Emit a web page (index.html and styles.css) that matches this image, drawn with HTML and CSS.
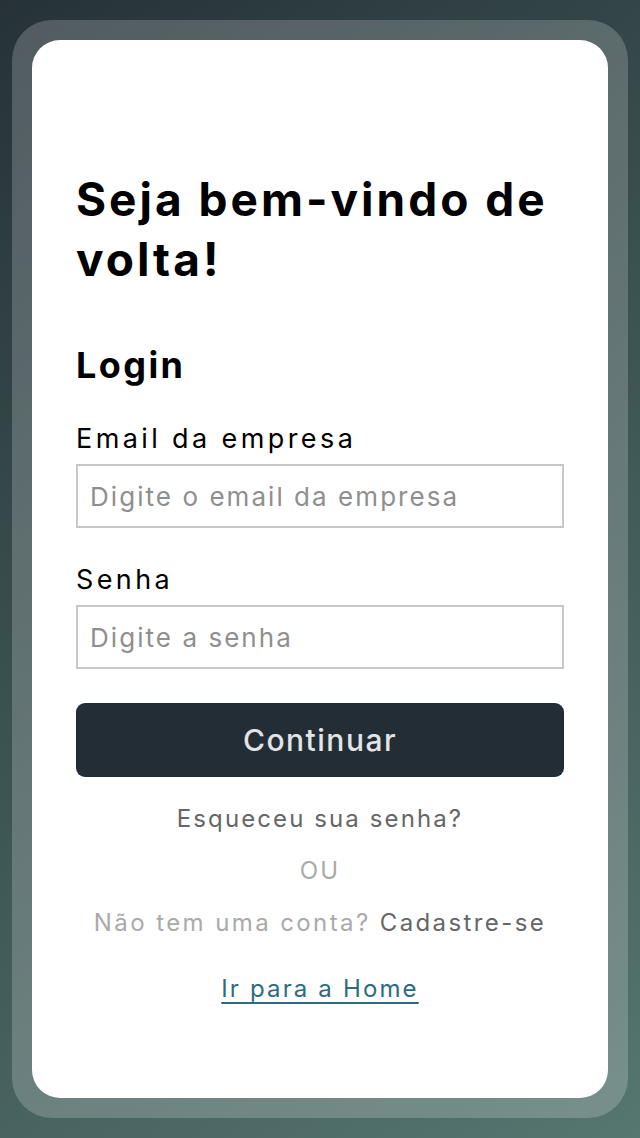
FILE: index.html
```html
<!DOCTYPE html>
<html lang="pt-BR">
<head>
<meta charset="utf-8">
<title>Login</title>
<link rel="stylesheet" href="styles.css">
</head>
<body>
<main class="frame">
  <section class="card">
    <h1 class="title">Seja bem-vindo de volta!</h1>
    <h2 class="subtitle">Login</h2>
    <form class="form">
      <label class="field">
        <span class="label">Email da empresa</span>
        <input class="input" type="email" placeholder="Digite o email da empresa">
      </label>
      <label class="field">
        <span class="label">Senha</span>
        <input class="input" type="password" placeholder="Digite a senha">
      </label>
      <button class="btn" type="button">Continuar</button>
    </form>
    <p class="forgot">Esqueceu sua senha?</p>
    <p class="or">OU</p>
    <p class="signup">Não tem uma conta? <span class="signup-link">Cadastre-se</span></p>
    <a class="home" href="#">Ir para a Home</a>
  </section>
</main>
</body>
</html>
```

FILE: styles.css
```css
* { box-sizing: border-box; }
html, body { margin: 0; padding: 0; }
body {
  width: 640px;
  height: 1138px;
  padding: 20px 12px;
  background: linear-gradient(145deg, #263238 0%, #567670 100%);
  font-family: Inter, "Noto Sans", sans-serif;
}
.frame {
  height: 100%;
  padding: 20px;
  border-radius: 40px;
  background: rgba(255, 255, 255, 0.2);
}
.card {
  height: 100%;
  background: #fff;
  border-radius: 28px;
  padding: 129px 44px 0;
  display: flex;
  flex-direction: column;
  align-items: stretch;
}
.title {
  margin: 0;
  font-size: 46px;
  line-height: 60px;
  font-weight: 700;
  letter-spacing: 3px;
  color: #000;
}
.subtitle {
  margin: 54px 0 0;
  font-size: 36px;
  line-height: 44px;
  font-weight: 700;
  letter-spacing: 2.4px;
  color: #000;
}
.form {
  display: flex;
  flex-direction: column;
  margin-top: 34px;
}
.field {
  display: flex;
  flex-direction: column;
  margin-bottom: 34px;
}
.label {
  font-size: 27px;
  line-height: 36px;
  letter-spacing: 3.4px;
  color: #000;
  margin-bottom: 7px;
}
.input {
  height: 64px;
  border: 2px solid #c8c8c8;
  border-radius: 0;
  padding: 0 12px;
  font-family: inherit;
  font-size: 26px;
  letter-spacing: 2.05px;
  color: #333;
}
.input::placeholder { color: #8f8f8f; }
.btn {
  height: 74px;
  border: 0;
  border-radius: 9px;
  background: #232d36;
  color: #e4e4e4;
  font-family: inherit;
  font-size: 30px;
  font-weight: 500;
  letter-spacing: 1.5px;
}
.forgot, .or, .signup {
  margin: 0;
  text-align: center;
  font-size: 24px;
  line-height: 52px;
  letter-spacing: 2.1px;
}
.forgot { margin-top: 16px; color: #666; }
.or { color: #aaa; }
.signup { color: #aaa; letter-spacing: 2.4px; }
.signup-link { color: #666; }
.home {
  align-self: center;
  margin-top: 22px;
  font-size: 24px;
  line-height: 36px;
  letter-spacing: 2.15px;
  color: #2e6b80;
  text-decoration: underline;
  text-decoration-thickness: 2px;
  text-underline-offset: 5px;
}
```
